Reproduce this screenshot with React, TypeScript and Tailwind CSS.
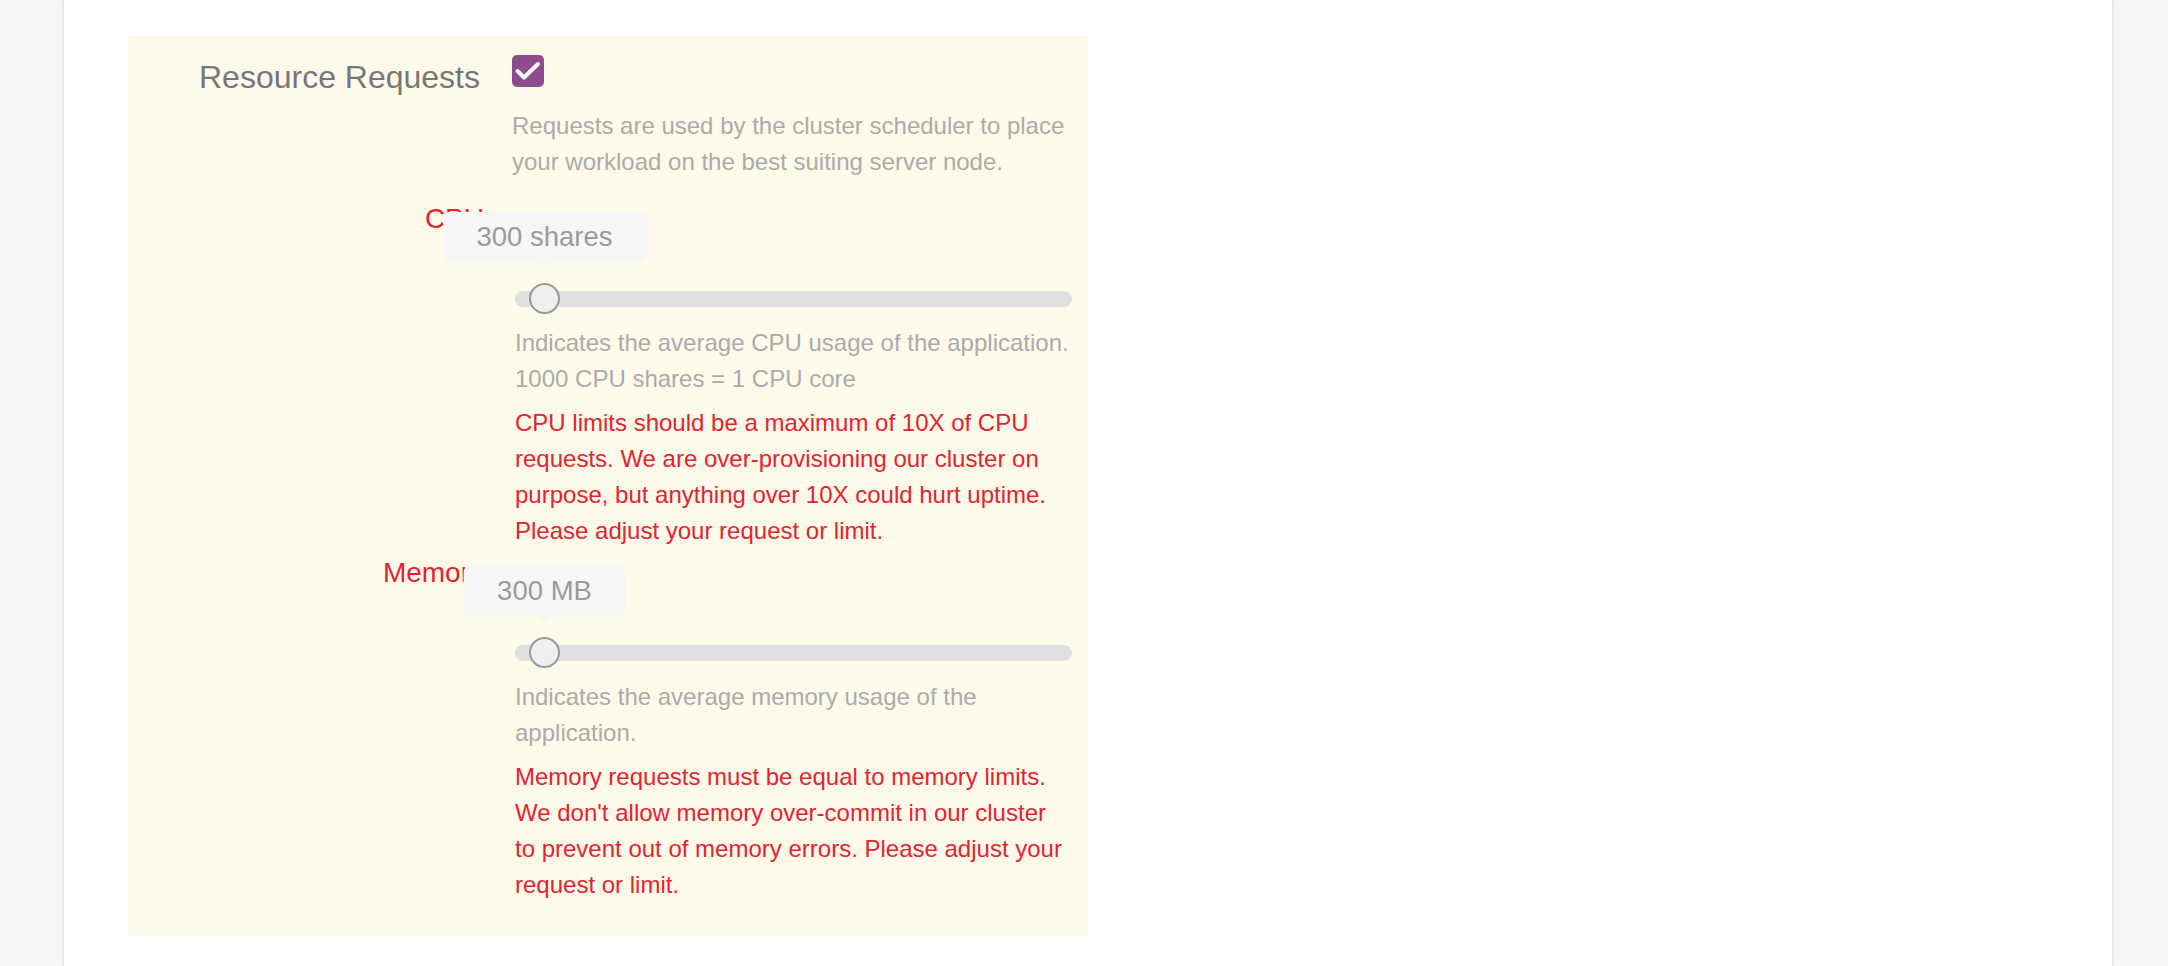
import React from "react";

interface ResourceSliderProps {
  label: string;
  value: string;
  description: string;
  warning: string;
  className?: string;
}

function ResourceSlider({ label, value, description, warning, className = "" }: ResourceSliderProps) {
  return (
    <div className={`flex ${className}`}>
      <div className="w-[387px] shrink-0 pr-[31px] pt-[2px] text-right text-[28px] leading-[36px] text-[#e52330]">
        {label}
      </div>
      <div className="w-[557px] shrink-0">
        <div className="relative h-[126px]">
          <div className="absolute left-0 right-0 top-[92px] h-[16px] rounded-full bg-[#e0e0e0]" />
          <div className="absolute left-[14px] top-[84px] h-[31px] w-[31px] rounded-full border-2 border-[#9a9a9a] bg-[#efefef]" />
          <div className="absolute left-[29.5px] top-[13px] -translate-x-1/2">
            <div className="flex h-[50px] items-center whitespace-nowrap rounded-[6px] bg-[#f6f6f7] px-[34px] text-[27.5px] text-[#9b9b9b]">
              {value}
            </div>
            <div className="mx-auto h-0 w-0 border-x-[7px] border-t-[7px] border-x-transparent border-t-[#f6f6f7]" />
          </div>
        </div>
        <p className="text-[24px] leading-[36px] text-[#ababab]">{description}</p>
        <p className="mt-[8px] text-[24px] leading-[36px] text-[#e52330]">{warning}</p>
      </div>
    </div>
  );
}

export default function App() {
  return (
    <div className="min-h-screen bg-[#f6f6f6] font-['Liberation_Sans',Arial,sans-serif]">
      <div className="ml-[64px] min-h-[966px] w-[2048px] bg-white px-[64px] pt-[36px] shadow-[0_0_3px_rgba(0,0,0,0.18)]">
        <div className="w-[960px] bg-[#fefaea] pt-[19px] pb-[33px]">
          <div className="flex">
            <div className="w-[384px] shrink-0 pr-[32px] text-right">
              <span className="mt-[4px] block text-[32px] leading-[36px] text-[#777777]">Resource Requests</span>
            </div>
            <div className="w-[560px] shrink-0">
              <div className="flex h-[32px] w-[32px] items-center justify-center rounded-[5px] bg-[#8f4b8b]">
                <svg width="32" height="32" viewBox="0 0 32 32" fill="none">
                  <polyline
                    points="5.5,16 12,22.5 26,9"
                    stroke="white"
                    strokeWidth="4"
                    strokeLinecap="round"
                    strokeLinejoin="round"
                  />
                </svg>
              </div>
              <p className="mt-[21px] text-[24px] leading-[36px] text-[#ababab]">
                Requests are used by the cluster scheduler to place your workload on the best suiting server node.
              </p>
            </div>
          </div>

          <ResourceSlider
            className="mt-[19px]"
            label="CPU"
            value="300 shares"
            description="Indicates the average CPU usage of the application. 1000 CPU shares = 1 CPU core"
            warning="CPU limits should be a maximum of 10X of CPU requests. We are over-provisioning our cluster on purpose, but anything over 10X could hurt uptime. Please adjust your request or limit."
          />

          <ResourceSlider
            className="mt-[4px]"
            label="Memory"
            value="300 MB"
            description="Indicates the average memory usage of the application."
            warning="Memory requests must be equal to memory limits. We don't allow memory over-commit in our cluster to prevent out of memory errors. Please adjust your request or limit."
          />
        </div>
      </div>
    </div>
  );
}
